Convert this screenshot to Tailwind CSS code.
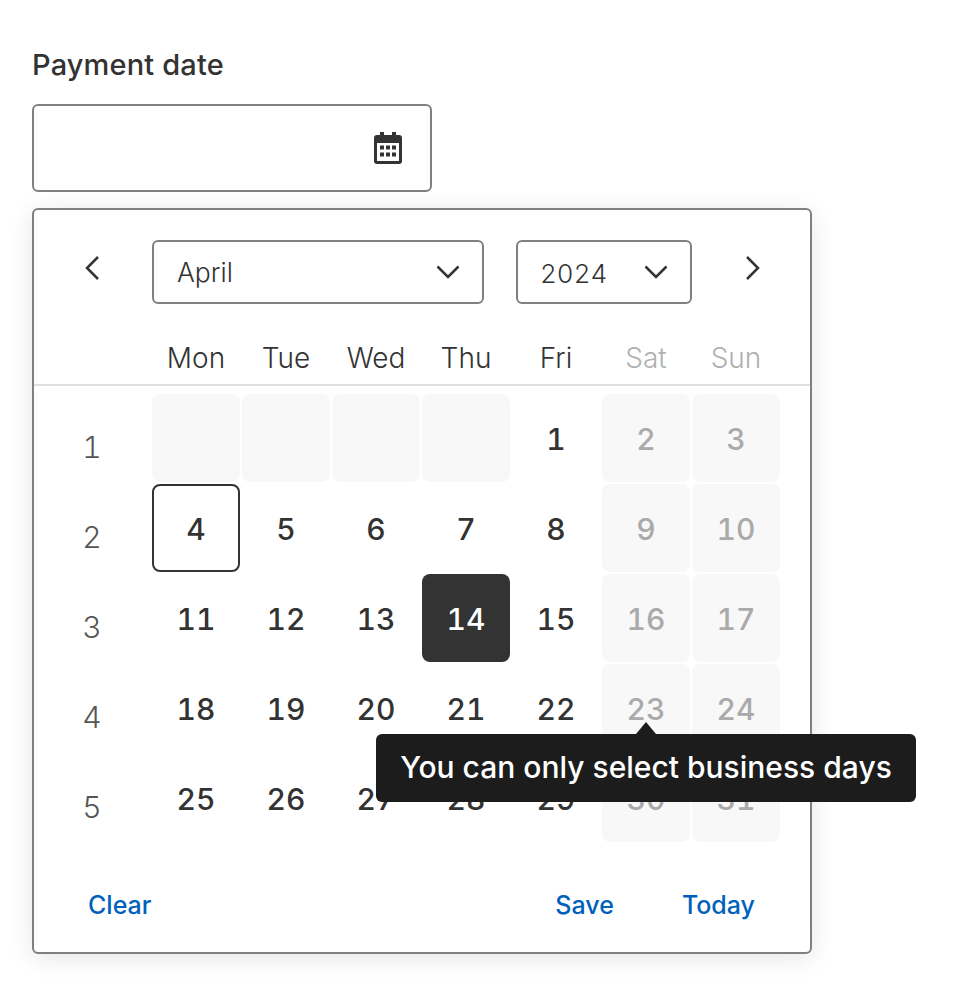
<!DOCTYPE html>
<html lang="en">
<head>
<meta charset="UTF-8">
<title>Payment date</title>
<script src="https://cdn.jsdelivr.net/npm/@tailwindcss/browser@4"></script>
</head>
<body class="bg-white font-['Inter',sans-serif] text-[#333333]">
<div class="relative w-[960px] h-[986px] overflow-hidden pl-8 pt-[46px]">
  <label class="block h-[38px] text-[29px] leading-[38px] font-medium tracking-[0.15px]">Payment date</label>
  <div class="mt-5 w-[400px] h-[88px] border-2 border-[#808080] rounded-md flex items-center justify-end pr-[28px]">
    <!-- calendar icon -->
    <svg width="28" height="32" viewBox="0 0 28 32" fill="#333333">
      <path fill-rule="evenodd" d="M6 0h4v3h8V0h4v3h3a3 3 0 0 1 3 3v23a3 3 0 0 1-3 3H3a3 3 0 0 1-3-3V6a3 3 0 0 1 3-3h3zM3 11v18h22V11z"/>
      <path d="M6 13.500h4v4H6zM12 13.500h4v4h-4zM18 13.500h4v4h-4zM6 20.500h4v4H6zM12 20.500h4v4h-4zM18 20.500h4v4h-4z"/>
    </svg>
  </div>
  <div class="mt-4 w-[780px] h-[746px] border-2 border-[#808080] rounded-md bg-white shadow-[0_4px_24px_rgba(0,0,0,0.1)] flex flex-col">
    <!-- month and year -->
    <div class="h-[94px] flex items-start pt-[30px]">
      <div class="w-[118px] h-[56px] flex items-center justify-center pr-[2px]">
        <svg width="16" height="26" viewBox="0 0 16 26" fill="none" stroke="#333333" stroke-width="2.500"><path d="M14 2 3 13l11 11"/></svg>
      </div>
      <div class="w-[332px] h-16 border-2 border-[#808080] rounded-md flex items-center justify-between pl-[23px] pr-[22px] text-[26.500px] font-light">
        <span class="pt-[2px]">April</span>
        <svg width="24" height="14" viewBox="0 0 24 14" fill="none" stroke="#333333" stroke-width="2.500"><path d="M1.500 1.500 12 12 22.500 1.500"/></svg>
      </div>
      <div class="ml-8 w-[176px] h-16 border-2 border-[#808080] rounded-md flex items-center justify-between pl-[22px] pr-[22px] text-[26px] font-light tabular-nums">
        <span class="pt-[2px]">2024</span>
        <svg width="24" height="14" viewBox="0 0 24 14" fill="none" stroke="#333333" stroke-width="2.500"><path d="M1.500 1.500 12 12 22.500 1.500"/></svg>
      </div>
      <div class="w-[118px] h-[56px] flex items-center justify-center pl-[3px]">
        <svg width="16" height="26" viewBox="0 0 16 26" fill="none" stroke="#333333" stroke-width="2.500"><path d="m2 2 11 11L2 24"/></svg>
      </div>
    </div>
    <!-- weekdays -->
    <div class="h-[82px] border-b-2 border-[#e0e0e0] flex pl-[118px] gap-[2px] pt-[34px] text-[28px] font-light leading-[40px]">
      <div class="w-[88px] text-center">Mon</div>
      <div class="w-[88px] text-center">Tue</div>
      <div class="w-[88px] text-center">Wed</div>
      <div class="w-[88px] text-center">Thu</div>
      <div class="w-[88px] text-center">Fri</div>
      <div class="w-[88px] text-center text-[#b0b0b0]">Sat</div>
      <div class="w-[88px] text-center text-[#b0b0b0]">Sun</div>
    </div>
    <!-- days -->
    <div class="mt-2 grid grid-cols-[116px_repeat(7,88px)] gap-[2px] auto-rows-[88px] text-[30px] font-medium text-center leading-[90px] tabular-nums">
      <div class="font-light text-[#555555] pt-[8px]">1</div>
      <div class="bg-[#f8f8f8] rounded-lg"></div>
      <div class="bg-[#f8f8f8] rounded-lg"></div>
      <div class="bg-[#f8f8f8] rounded-lg"></div>
      <div class="bg-[#f8f8f8] rounded-lg"></div>
      <div>1</div>
      <div class="bg-[#f8f8f8] rounded-lg text-[#aaaaaa]">2</div>
      <div class="bg-[#f8f8f8] rounded-lg text-[#aaaaaa]">3</div>

      <div class="font-light text-[#555555] pt-[8px]">2</div>
      <div class="border-2 border-[#333333] rounded-lg leading-[86px]">4</div>
      <div>5</div>
      <div>6</div>
      <div>7</div>
      <div>8</div>
      <div class="bg-[#f8f8f8] rounded-lg text-[#aaaaaa]">9</div>
      <div class="bg-[#f8f8f8] rounded-lg text-[#aaaaaa]">10</div>

      <div class="font-light text-[#555555] pt-[8px]">3</div>
      <div>11</div>
      <div>12</div>
      <div>13</div>
      <div class="bg-[#333333] rounded-lg text-white">14</div>
      <div>15</div>
      <div class="bg-[#f8f8f8] rounded-lg text-[#aaaaaa]">16</div>
      <div class="bg-[#f8f8f8] rounded-lg text-[#aaaaaa]">17</div>

      <div class="font-light text-[#555555] pt-[8px]">4</div>
      <div>18</div>
      <div>19</div>
      <div>20</div>
      <div>21</div>
      <div>22</div>
      <div class="bg-[#f8f8f8] rounded-lg text-[#aaaaaa]">23</div>
      <div class="bg-[#f8f8f8] rounded-lg text-[#aaaaaa]">24</div>

      <div class="font-light text-[#555555] pt-[8px]">5</div>
      <div>25</div>
      <div>26</div>
      <div>27</div>
      <div>28</div>
      <div>29</div>
      <div class="bg-[#f8f8f8] rounded-lg text-[#aaaaaa]">30</div>
      <div class="bg-[#f8f8f8] rounded-lg text-[#aaaaaa]">31</div>
    </div>
    <!-- actions -->
    <div class="mt-[43px] flex items-center pl-[54px] text-[#0061bd] text-[25px] font-medium leading-[40px]">
      <span>Clear</span>
      <span class="ml-auto">Save</span>
      <span class="ml-[68px] mr-[55px]">Today</span>
    </div>
  </div>
  <!-- tooltip -->
  <div class="absolute left-[376px] top-[734px] w-[540px] h-[68px] bg-[#1c1c1c] rounded-md flex items-center justify-center text-white text-[30px] font-[450] whitespace-nowrap pb-[2px]">
    <span class="absolute left-[260px] -top-[12px] w-0 h-0 border-x-[10px] border-x-transparent border-b-[12px] border-b-[#1c1c1c]"></span>
    You can only select business days
  </div>
</div>
</body>
</html>
